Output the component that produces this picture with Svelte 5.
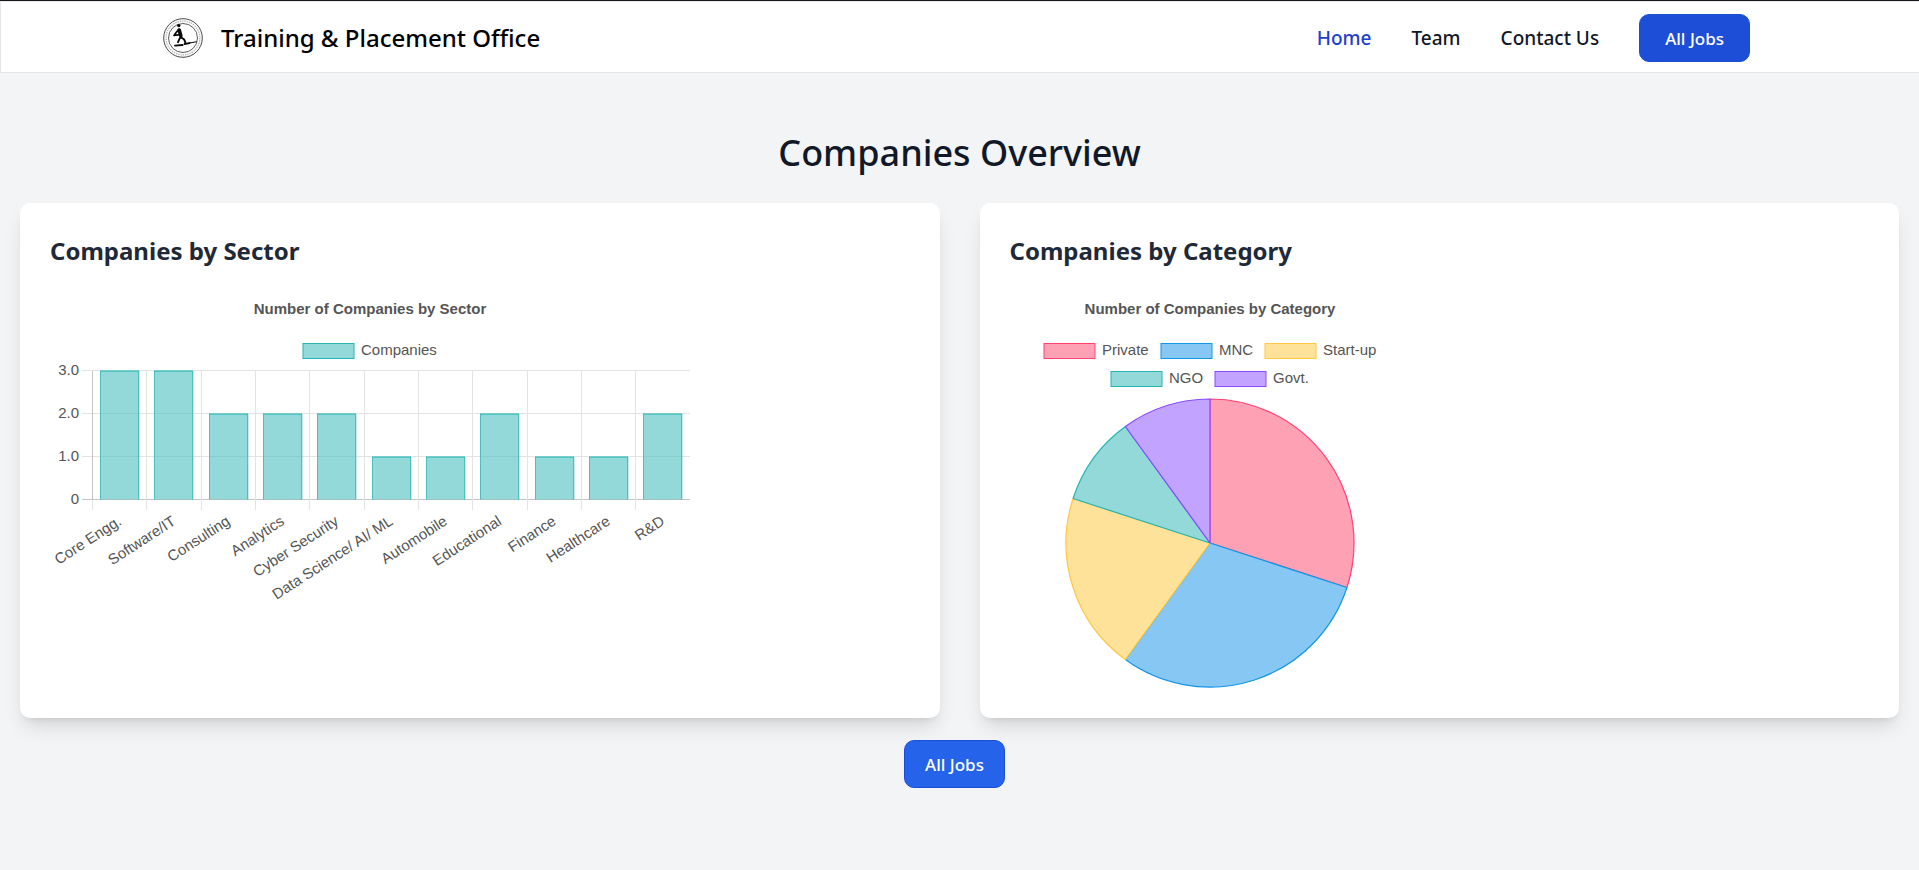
<script>
  const links = [
    { label: 'Home', active: true },
    { label: 'Team', active: false },
    { label: 'Contact Us', active: false },
  ];

  const sectors = [
    ['Core Engg.', 3],
    ['Software/IT', 3],
    ['Consulting', 2],
    ['Analytics', 2],
    ['Cyber Security', 2],
    ['Data Science/ AI/ ML', 1],
    ['Automobile', 1],
    ['Educational', 2],
    ['Finance', 1],
    ['Healthcare', 1],
    ['R&D', 2],
  ];

  // Bar chart geometry, in viewBox units
  const left = 42.5;
  const right = 640;
  const base = 211.5;
  const unit = 43;
  const step = (right - left) / sectors.length;
  const barWidth = 39;
  const ticks = [
    ['3.0', 3],
    ['2.0', 2],
    ['1.0', 1],
    ['0', 0],
  ];

  const bars = sectors.map(([name, value], i) => {
    const centre = left + step * (i + 0.5);
    const x = Math.round(centre - barWidth / 2) + 0.5;
    return { name, value, centre, x, y: base - unit * value + 0.5 };
  });

  // Pie slices, with the position of each legend entry
  const categories = [
    { name: 'Private', value: 3, fill: '#ffa1b5', line: '#ff4170', x: 34, y: 55 },
    { name: 'MNC', value: 3, fill: '#86c7f3', line: '#1296e8', x: 151, y: 55 },
    { name: 'Start-up', value: 2, fill: '#ffe29a', line: '#ffc843', x: 255, y: 55 },
    { name: 'NGO', value: 1, fill: '#93d9d9', line: '#25b5b5', x: 101, y: 83 },
    { name: 'Govt.', value: 1, fill: '#c2a3ff', line: '#8a4aff', x: 205, y: 83 },
  ];
  const cx = 200;
  const cy = 255;
  const radius = 144;
  const total = categories.reduce((sum, c) => sum + c.value, 0);
  const point = (share) => {
    const angle = share * Math.PI * 2 - Math.PI / 2;
    return `${cx + radius * Math.cos(angle)} ${cy + radius * Math.sin(angle)}`;
  };
  let start = 0;
  const slices = categories.map((c) => {
    const from = start / total;
    start += c.value;
    return {
      ...c,
      d: `M${cx} ${cy}L${point(from)}A${radius} ${radius} 0 0 1 ${point(start / total)}Z`,
    };
  });
</script>

<div class="page">
  <header>
    <div class="bar">
      <a class="brand" href="#home">
        <svg class="logo" viewBox="0 0 40 40" aria-hidden="true">
          <circle cx="20" cy="20" r="19.3" fill="#fff" stroke="#333" stroke-width=".9" />
          <circle cx="20" cy="20" r="16.9" fill="none" stroke="#aaa" stroke-width="1.2" stroke-dasharray="1.3 1" />
          <circle cx="20" cy="20" r="14.5" fill="none" stroke="#333" stroke-width=".8" />
          <g fill="none" stroke="#080808" stroke-linecap="round" stroke-linejoin="round">
            <circle cx="15.8" cy="7.6" r="1.7" fill="#080808" stroke="none" />
            <path d="M16.2 12l1.6 5.8" stroke-width="3.6" />
            <path d="M15.4 11.8l-3.6 4.4M11 17.4l4.4-.6" stroke-width="1.8" />
            <path d="M17.6 19l3.6 2.6 1.2 3M17.2 19.4l-2.2 4.8" stroke-width="1.9" />
            <path d="M12 27.6l7.6-.6M21.6 26l5-.8" stroke-width="1.8" />
            <path d="M26 25l7.4-1.2" stroke-width="1" />
          </g>
        </svg>
        <span>Training &amp; Placement Office</span>
      </a>
      <nav>
        {#each links as link}
          <a href="#{link.label.toLowerCase().replace(' ', '-')}" class:active={link.active}>{link.label}</a>
        {/each}
        <button class="btn dark" type="button">All Jobs</button>
      </nav>
    </div>
  </header>

  <main>
    <h1>Companies Overview</h1>

    <div class="cards">
      <section class="card">
        <h2>Companies by Sector</h2>
        <svg class="bar-chart" viewBox="0 0 640 320" role="img" aria-label="Number of Companies by Sector">
          <text class="title" x="320" y="26" text-anchor="middle">Number of Companies by Sector</text>
          <rect class="teal" x="253" y="55.5" width="51" height="15" />
          <text class="label" x="311" y="67">Companies</text>
          <g shape-rendering="crispEdges">
            {#each ticks as [, value]}
              <line class="grid" class:axis={value === 0} x1="32" x2={right} y1={base - unit * value} y2={base - unit * value} />
            {/each}
            {#each { length: sectors.length + 1 } as _, i}
              <line class="grid" class:axis={i === 0} x1={left + step * i} x2={left + step * i} y1={base - unit * 3} y2={base} />
              <line class="grid" x1={left + step * i} x2={left + step * i} y1={base} y2={base + 10} />
            {/each}
          </g>
          {#each ticks as [label, value]}
            <text class="label" x="29" y={base + 4 - unit * value} text-anchor="end">{label}</text>
          {/each}
          {#each bars as b}
            <rect class="bar-fill" x={b.x} y={b.y} width={barWidth} height={base - b.y} />
            <path class="bar-side" d="M{b.x} {base}V{b.y}M{b.x + barWidth - 1} {b.y}V{base}" />
            <path class="bar-top" d="M{b.x - 0.5} {b.y}h{barWidth}" />
            <text class="label" text-anchor="end" dy="5" transform="translate({b.centre} {base + 20}) rotate(-33)">{b.name}</text>
          {/each}
        </svg>
      </section>

      <section class="card">
        <h2>Companies by Category</h2>
        <svg class="pie-chart" viewBox="0 0 400 400" role="img" aria-label="Number of Companies by Category">
          <text class="title" x="200" y="26" text-anchor="middle">Number of Companies by Category</text>
          {#each categories as c}
            <rect x={c.x} y={c.y + 0.5} width="51" height="15" fill={c.fill} stroke={c.line} />
            <text class="label" x={c.x + 58} y={c.y + 12}>{c.name}</text>
          {/each}
          {#each slices as s}
            <path d={s.d} fill={s.fill} stroke={s.line} stroke-width="1.2" stroke-linejoin="bevel" />
          {/each}
        </svg>
      </section>
    </div>

    <div class="actions">
      <button class="btn" type="button">All Jobs</button>
    </div>
  </main>
</div>

<style>
  :global(body) {
    margin: 0;
    background: #f3f4f6;
  }
  .page {
    min-height: 100vh;
    box-sizing: border-box;
    border-top: 1px solid #18181b;
    background: #f3f4f6;
    color: #111827;
    font-family: 'Segoe UI', 'Noto Sans', 'Open Sans', sans-serif;
  }
  header {
    padding-right: 10px;
    background: #fff;
    border: 1px solid #e5e7eb;
    border-right: 0;
  }
  .bar {
    display: flex;
    align-items: center;
    justify-content: space-between;
    box-sizing: border-box;
    max-width: 1590px;
    height: 70px;
    margin: 0 auto;
    padding-top: 2px;
  }
  a {
    color: inherit;
    text-decoration: none;
  }
  .brand {
    display: flex;
    align-items: center;
    gap: 18px;
    padding-left: 3px;
    color: #000;
    font-size: 24px;
    font-weight: 500;
    line-height: 32px;
  }
  .logo {
    width: 40px;
    height: 40px;
  }
  nav {
    display: flex;
    align-items: center;
    gap: 40px;
    font-size: 19px;
    font-weight: 500;
    line-height: 28px;
  }
  .active {
    color: #1d3fd0;
  }
  .btn {
    box-sizing: border-box;
    height: 48px;
    padding: 2px 20px 0;
    border: 1px solid #1d4ed8;
    border-radius: 10px;
    background: #2563eb;
    color: #fff;
    font: 500 17px/24px 'Segoe UI', 'Noto Sans', 'Open Sans', sans-serif;
  }
  .dark {
    padding: 2px 25px 0;
    background: #1d4ed8;
  }
  main {
    padding: 60px 20px;
  }
  h1 {
    margin: 0 0 30px;
    font-size: 36px;
    font-weight: 500;
    line-height: 40px;
    text-align: center;
  }
  .cards {
    display: grid;
    grid-template-columns: 1fr 1fr;
    gap: 40px;
  }
  .card {
    padding: 30px;
    border-radius: 10px;
    background: #fff;
    box-shadow: 0 12px 20px -4px rgb(0 0 0 / 0.12), 0 5px 8px -5px rgb(0 0 0 / 0.12);
  }
  h2 {
    margin: 0 0 20px;
    color: #1f2937;
    font-size: 24px;
    font-weight: 700;
    line-height: 35px;
  }
  svg {
    display: block;
  }
  .bar-chart {
    width: 100%;
    max-width: 640px;
  }
  .pie-chart {
    width: 100%;
    max-width: 400px;
  }
  .title,
  .label {
    fill: #555;
    font-family: 'Liberation Sans', Arial, sans-serif;
    font-size: 15px;
  }
  .title {
    font-weight: 700;
  }
  .teal {
    fill: #93d9d9;
    stroke: #25b5b5;
  }
  .grid {
    stroke: #e3e3e3;
  }
  .axis {
    stroke: #c4c4c4;
  }
  .bar-fill {
    fill: rgb(75 192 192 / 0.6);
  }
  .bar-side,
  .bar-top {
    fill: none;
    stroke: #4bc0c0;
  }
  .bar-top {
    stroke: #12b2b2;
  }
  .actions {
    display: flex;
    justify-content: center;
    margin: 22px 10px 0 0;
  }
</style>
